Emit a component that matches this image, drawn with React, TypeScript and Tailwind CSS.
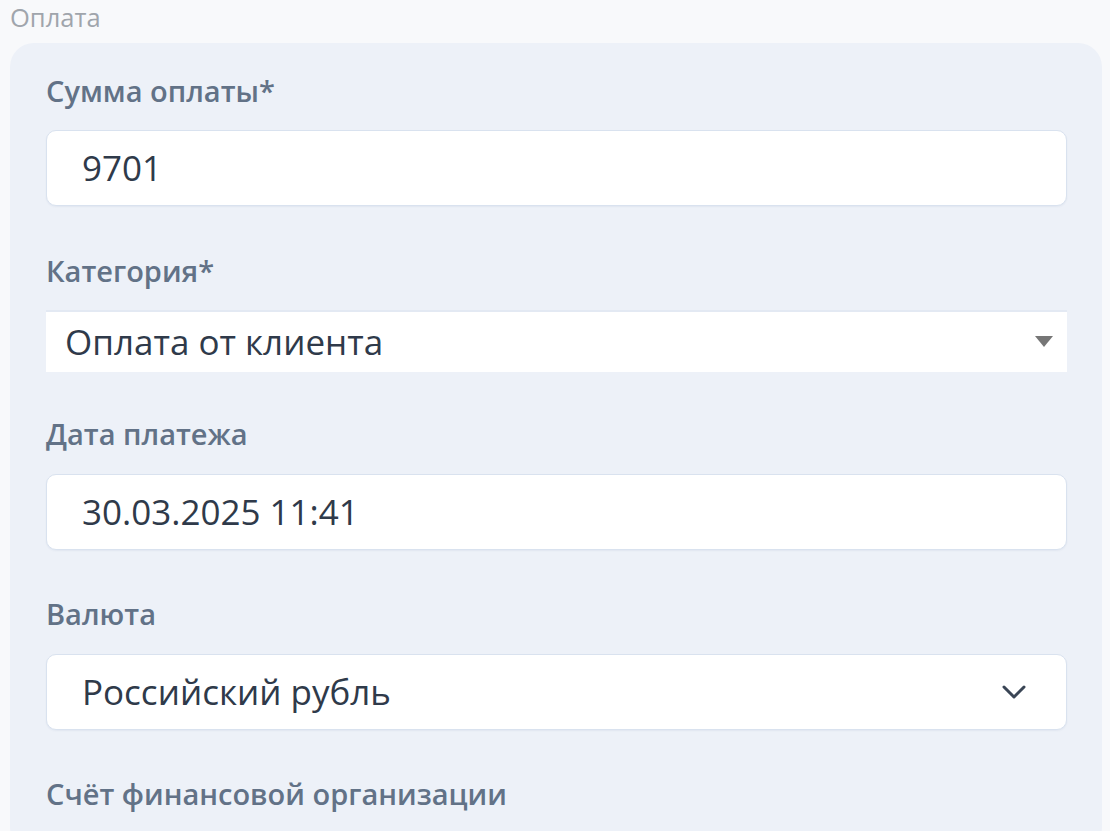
import React from "react";

function Label({ children }: { children: React.ReactNode }) {
  return (
    <div className="text-[29px] leading-[36px] font-semibold text-[#627287]">{children}</div>
  );
}

export default function App() {
  return (
    <div className="min-h-[831px] w-[1110px] bg-[#f8f9fb] overflow-hidden" style={{ fontFamily: '"Open Sans", "Noto Sans", sans-serif' }}>
      <div className="pl-[10px] pt-[2px] text-[25.5px] leading-[31px] text-[#a0a5ac]">Оплата</div>
      <div className="mt-[10px] ml-[10px] mr-[8px] rounded-[24px] bg-[#edf1f8] pl-[36px] pr-[35px] pt-[30px] pb-[40px] min-h-[800px]">
        <Label>Сумма оплаты*</Label>
        <div className="mt-[21px] h-[76px] rounded-[10px] border border-[#d9e2ef] bg-white flex items-center pl-[35px] text-[35px] text-[#2f3a4a] shadow-[0_1px_2px_rgba(30,60,120,0.06)]">
          9701
        </div>
        <div className="mt-[47px]">
          <Label>Категория*</Label>
        </div>
        <div className="mt-[21px] h-[62px] bg-white border-t-2 border-[#e3e9f3] flex items-center justify-between pl-[19px] pr-[14px] text-[35px] text-[#2f3a4a]">
          <span>Оплата от клиента</span>
          <svg width="18" height="12" viewBox="0 0 18 12"><path d="M0 0 H18 L9 11 Z" fill="#767676" /></svg>
        </div>
        <div className="mt-[44px]">
          <Label>Дата платежа</Label>
        </div>
        <div className="mt-[22px] h-[76px] rounded-[10px] border border-[#d9e2ef] bg-white flex items-center pl-[35px] text-[35px] text-[#2f3a4a] shadow-[0_1px_2px_rgba(30,60,120,0.06)]">
          30.03.2025 11:41
        </div>
        <div className="mt-[46px]">
          <Label>Валюта</Label>
        </div>
        <div className="mt-[22px] h-[76px] rounded-[10px] border border-[#d9e2ef] bg-white flex items-center justify-between pl-[35px] pr-[40px] text-[35px] text-[#2f3a4a] shadow-[0_1px_2px_rgba(30,60,120,0.06)]">
          <span>Российский рубль</span>
          <svg width="24" height="16" viewBox="0 0 24 16"><path d="M2 3 L12 13 L22 3" fill="none" stroke="#3a4555" strokeWidth="3" strokeLinecap="round" strokeLinejoin="round" /></svg>
        </div>
        <div className="mt-[46px]">
          <Label>Счёт финансовой организации</Label>
        </div>
      </div>
    </div>
  );
}
